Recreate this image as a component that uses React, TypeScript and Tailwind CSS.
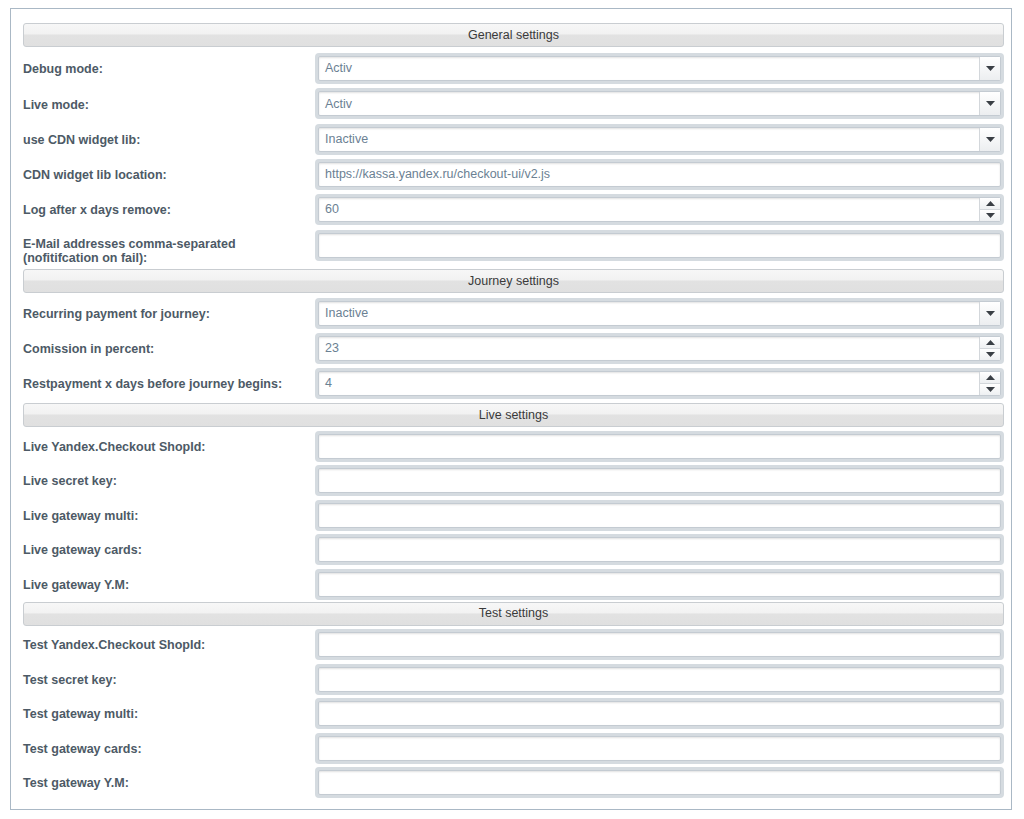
import React from "react";

const FONT = { fontFamily: '"Liberation Sans", Arial, Helvetica, sans-serif' };

function Header({ title, className = "" }: { title: string; className?: string }) {
  return (
    <div
      className={`h-[24px] w-full shrink-0 rounded-[3px] border border-[#c9cdd1] bg-[linear-gradient(to_bottom,#f7f7f7_0%,#f2f2f2_45%,#e2e2e2_50%,#e0e0e0_100%)] flex items-center justify-center text-[12.5px] text-[#3a3a3a] ${className}`}
    >
      {title}
    </div>
  );
}

function Triangle({ up = false }: { up?: boolean }) {
  return (
    <svg width="9" height="5" viewBox="0 0 9 5" className="block">
      {up ? <path d="M0 5 L4.5 0 L9 5 Z" fill="#3a3f45" /> : <path d="M0 0 L9 0 L4.5 5 Z" fill="#3a3f45" />}
    </svg>
  );
}

type Kind = "select" | "text" | "number";

function Field({ kind, value }: { kind: Kind; value?: string }) {
  return (
    <div className="h-[31px] w-full rounded-[4px] bg-[#d5dbe0] p-[3px]">
      <div className="h-full w-full rounded-[2px] bg-white border border-[#c4cbd2] shadow-[inset_0_1px_2px_rgba(0,0,0,0.12)] flex items-stretch">
        <div className="flex-1 flex items-center pl-[6px] text-[12.5px] text-[#6b8193]">{value}</div>
        {kind === "select" && (
          <div className="w-[21px] border-l border-[#d3d7db] bg-[linear-gradient(to_bottom,#ffffff,#eceef0)] flex items-center justify-center">
            <Triangle />
          </div>
        )}
        {kind === "number" && (
          <div className="w-[21px] flex flex-col">
            <div className="flex-1 border-l border-b border-[#d3d7db] bg-[linear-gradient(to_bottom,#ffffff,#eef0f2)] flex items-center justify-center">
              <Triangle up />
            </div>
            <div className="flex-1 border-l border-[#d3d7db] bg-[linear-gradient(to_bottom,#ffffff,#eef0f2)] flex items-center justify-center">
              <Triangle />
            </div>
          </div>
        )}
      </div>
    </div>
  );
}

function Row({ label, kind, value, h }: { label: string; kind: Kind; value?: string; h: string }) {
  return (
    <div className={`${h} flex items-center`}>
      <div className="w-[292px] shrink-0 font-bold text-[12.5px] text-[#4d5a66] pt-[2px]">{label}</div>
      <div className="flex-1">
        <Field kind={kind} value={value} />
      </div>
    </div>
  );
}

export default function App() {
  return (
    <div className="bg-white w-[1024px] h-[819px]" style={FONT}>
      <div className="ml-[10px] mt-[8px] w-[1002px] border border-[#aab8c5] pl-[12px] pr-[7px] pt-[14px] pb-[9px] flex flex-col">
        <Header title="General settings" className="mb-[4px]" />
        <Row h="h-[35.25px]" label="Debug mode:" kind="select" value="Activ" />
        <Row h="h-[35.25px]" label="Live mode:" kind="select" value="Activ" />
        <Row h="h-[35.25px]" label="use CDN widget lib:" kind="select" value="Inactive" />
        <Row h="h-[35.25px]" label="CDN widget lib location:" kind="text" value="https://kassa.yandex.ru/checkout-ui/v2.js" />
        <Row h="h-[35.25px]" label="Log after x days remove:" kind="number" value="60" />
        <div className="h-[41.75px] flex items-center">
          <div className="w-[292px] shrink-0 font-bold text-[12.5px] leading-[14px] text-[#4d5a66] pt-[6px]">
            E-Mail addresses comma-separated
            <br />
            (nofitifcation on fail):
          </div>
          <div className="flex-1 mb-[6px]">
            <Field kind="text" />
          </div>
        </div>

        <Header title="Journey settings" className="mb-[3px]" />
        <Row h="h-[35px]" label="Recurring payment for journey:" kind="select" value="Inactive" />
        <Row h="h-[35px]" label="Comission in percent:" kind="number" value="23" />
        <Row h="h-[35px]" label="Restpayment x days before journey begins:" kind="number" value="4" />

        <Header title="Live settings" className="mt-[2px] mb-[2px]" />
        <Row h="h-[34.5px]" label="Live Yandex.Checkout ShopId:" kind="text" />
        <Row h="h-[34.5px]" label="Live secret key:" kind="text" />
        <Row h="h-[34.5px]" label="Live gateway multi:" kind="text" />
        <Row h="h-[34.5px]" label="Live gateway cards:" kind="text" />
        <Row h="h-[34.5px]" label="Live gateway Y.M:" kind="text" />

        <Header title="Test settings" className="mb-[2px]" />
        <Row h="h-[34.5px]" label="Test Yandex.Checkout ShopId:" kind="text" />
        <Row h="h-[34.5px]" label="Test secret key:" kind="text" />
        <Row h="h-[34.5px]" label="Test gateway multi:" kind="text" />
        <Row h="h-[34.5px]" label="Test gateway cards:" kind="text" />
        <Row h="h-[34.5px]" label="Test gateway Y.M:" kind="text" />
      </div>
    </div>
  );
}
